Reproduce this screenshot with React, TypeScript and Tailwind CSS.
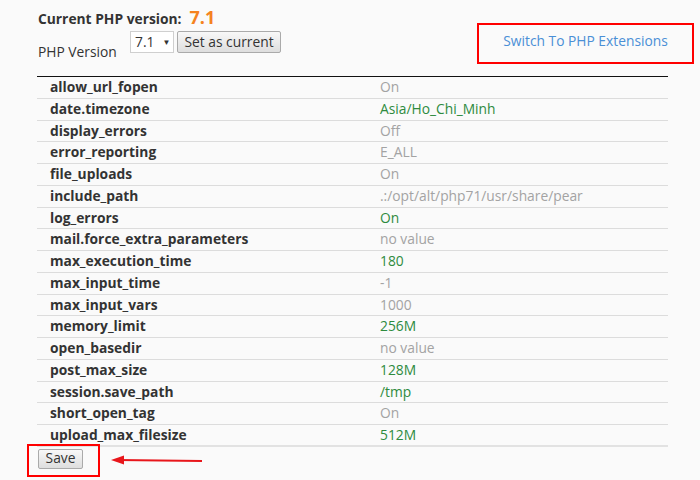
import React from "react";

const rows: [string, string, "g" | "n"][] = [
  ["allow_url_fopen", "On", "n"],
  ["date.timezone", "Asia/Ho_Chi_Minh", "g"],
  ["display_errors", "Off", "n"],
  ["error_reporting", "E_ALL", "n"],
  ["file_uploads", "On", "n"],
  ["include_path", ".:/opt/alt/php71/usr/share/pear", "n"],
  ["log_errors", "On", "g"],
  ["mail.force_extra_parameters", "no value", "n"],
  ["max_execution_time", "180", "g"],
  ["max_input_time", "-1", "n"],
  ["max_input_vars", "1000", "n"],
  ["memory_limit", "256M", "g"],
  ["open_basedir", "no value", "n"],
  ["post_max_size", "128M", "g"],
  ["session.save_path", "/tmp", "g"],
  ["short_open_tag", "On", "n"],
  ["upload_max_filesize", "512M", "g"],
];

export default function App() {
  return (
    <div
      className="relative w-[700px] h-[480px] bg-[#fafafa] text-[#333] overflow-hidden"
      style={{ fontFamily: '"Open Sans", "Noto Sans", sans-serif' }}
    >
      <div className="pl-[37px] w-[668px] flex flex-col">
        <div className="pt-[9px] h-[28px] flex items-center pl-[1px]">
          <span className="text-[13.8px] font-bold leading-[20px] text-[#333]">Current PHP version:</span>
          <span className="ml-[8px] text-[18px] font-bold leading-[20px] text-[#f58220] -mt-[3px]">7.1</span>
        </div>
        <div className="flex h-[48px] pl-[1px] pt-[3px]">
          <span className="text-[13.8px] leading-[18px] mt-[12px] w-[92px]">PHP Version</span>
          <div className="h-[22px] w-[44px] bg-white border border-[#cfcfcf] flex items-center pl-[4px] text-[13.8px]">
            <span>7.1</span>
            <span className="ml-[8px] text-[8px]">▼</span>
          </div>
          <div className="ml-[3px] h-[22px] w-[104px] border border-[#aaa] rounded-[2px] bg-gradient-to-b from-[#f8f8f8] to-[#dedede] flex items-center justify-center text-[13.8px] text-[#333]">
            Set as current
          </div>
        </div>
        <div className="border-t-[1.5px] border-[#111]">
          {rows.map(([k, v, c], i) => (
            <div
              key={k}
              className={`flex items-center h-[21.76px] border-b ${i === rows.length - 1 ? "border-b-2 border-[#e2e2e2]" : "border-[#dcdcdc]"}`}
            >
              <span className="w-[330px] pl-[13px] text-[13.8px] font-bold text-[#333]">{k}</span>
              <span className={`pl-[13px] text-[13.8px] ${c === "g" ? "text-[#2e8b3e]" : "text-[#a3a3a3]"}`}>{v}</span>
            </div>
          ))}
        </div>
        <div className="pt-[2px] pl-[1px]">
          <div className="h-[20px] w-[45px] border border-[#aaa] rounded-[2px] bg-gradient-to-b from-[#f8f8f8] to-[#dedede] flex items-center justify-center text-[13.8px] text-[#333]">
            Save
          </div>
        </div>
      </div>

      <div className="absolute left-[477px] top-[23px] w-[217px] h-[41px] border-[2.5px] border-[#ff0000] flex items-center justify-center pb-[4px]">
        <span className="text-[13.8px] text-[#4a8fd6]">Switch To PHP Extensions</span>
      </div>

      <div className="absolute left-[27px] top-[444px] w-[73px] h-[33px] border-[2.5px] border-[#ff0000]" />

      <svg className="absolute left-[108px] top-[452px]" width="98" height="16" viewBox="0 0 98 16">
        <line x1="10" y1="8" x2="94" y2="9" stroke="#e8161b" strokeWidth="2" />
        <polygon points="3,8 16,3.5 16,12.5" fill="#e8161b" />
      </svg>
    </div>
  );
}
